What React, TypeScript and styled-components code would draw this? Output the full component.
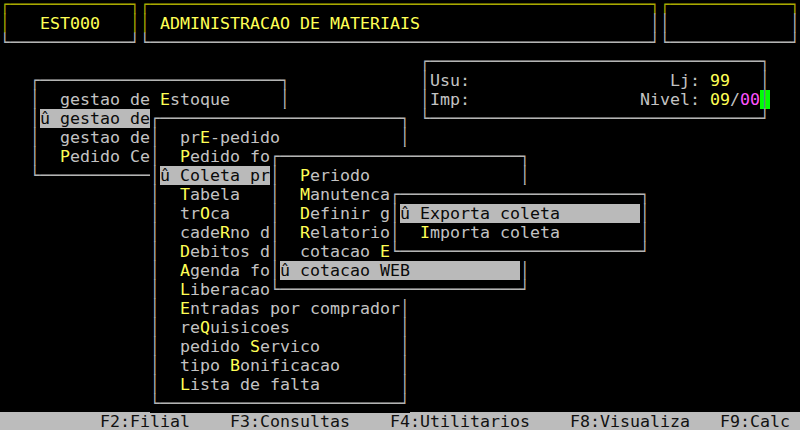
import React from 'react';
import styled, { createGlobalStyle } from 'styled-components';

const c_bg = '#000000';
const c_text = '#c3c3c3';
const c_line = '#b4b4b4';
const c_line_gold = '#a8a800';
const c_hot = '#ffff55';
const c_select = '#bababa';
const c_ink = '#0a0a0a';
const c_magenta = '#ff55ff';
const c_cursor = '#00ff00';

// one terminal cell
const CW = 10;
const CH = 19;

const GlobalStyle = createGlobalStyle`
  html, body {
    margin: 0;
    padding: 0;
    background: ${c_bg};
    overflow: hidden;
  }
`;

const Screen = styled.div`
  width: 800px;
  height: 430px;
  overflow: hidden;
  background: ${c_bg};
  display: flex;
  flex-direction: column;
  font-family: 'DejaVu Sans Mono', 'Liberation Mono', monospace;
  font-size: 16.61px;
  line-height: ${CH}px;
  color: ${c_text};
  white-space: pre;
`;

const Desktop = styled.div`
  position: relative;
  flex: none;
  height: ${22 * CH - 1}px;
  margin-top: -5px;
`;

const Window = styled.div<{ $col: number; $row: number }>`
  position: absolute;
  left: ${(p) => p.$col * CW}px;
  top: ${(p) => p.$row * CH}px;
  background: ${c_bg};
  display: flex;
  flex-direction: column;
`;

const Line = styled.div`
  display: flex;
  height: ${CH}px;
`;

const Edge = styled.span<{ $gold?: boolean }>`
  color: ${(p) => (p.$gold ? c_line_gold : c_line)};
`;

const CursorEdge = styled.span`
  background: ${c_cursor};
  color: #6f7c8c;
`;

const Body = styled.span<{ $w: number; $selected?: boolean }>`
  width: ${(p) => p.$w * CW}px;
  overflow: hidden;
  background: ${(p) => (p.$selected ? c_select : 'transparent')};
  color: ${(p) => (p.$selected ? c_ink : c_text)};
`;

const Hot = styled.span`
  color: ${c_hot};
`;

const Magenta = styled.span`
  color: ${c_magenta};
`;

const StatusBar = styled.div`
  flex: none;
  display: flex;
  height: ${CH}px;
  padding-left: ${10 * CW}px;
  background: #bcbcbc;
  color: #111111;
`;

const FKey = styled.span<{ $gap: number }>`
  margin-left: ${(p) => p.$gap * CW}px;
`;

const hline = (w: number, l: string, r: string) => l + '─'.repeat(w - 2) + r;

type BannerProps = {
  col: number;
  width: number;
  goldLeft?: boolean;
  goldRight?: boolean;
  children?: React.ReactNode;
};

const Banner = ({ col, width, goldLeft, goldRight, children }: BannerProps) => (
  <Window $col={col} $row={0}>
    <Line>
      <Edge $gold>{hline(width, '┌', '┐')}</Edge>
    </Line>
    <Line>
      <Edge $gold={goldLeft}>│</Edge>
      <Body $w={width - 2}>
        <Hot>{children}</Hot>
      </Body>
      <Edge $gold={goldRight}>│</Edge>
    </Line>
    <Line>
      <Edge>{hline(width, '└', '┘')}</Edge>
    </Line>
  </Window>
);

// "~" marks the hotkey letter
type Item = { label: string; selected?: boolean };

const MenuLabel = ({ label, selected }: Item) => {
  const i = label.indexOf('~');
  if (i < 0) return <>{label}</>;
  const before = label.slice(0, i);
  const key = label.charAt(i + 1);
  const after = label.slice(i + 2);
  return (
    <>
      {before}
      {selected ? key : <Hot>{key}</Hot>}
      {after}
    </>
  );
};

const MENU_W = 26;

const Menu = ({ col, row, items }: { col: number; row: number; items: Item[] }) => (
  <Window $col={col} $row={row}>
    <Line>
      <Edge>{hline(MENU_W, '┌', '┐')}</Edge>
    </Line>
    {items.map((it) => (
      <Line key={it.label}>
        <Edge>│</Edge>
        <Body $w={MENU_W - 2} $selected={it.selected}>
          {it.selected ? 'û ' : '  '}
          <MenuLabel {...it} />
        </Body>
        <Edge>│</Edge>
      </Line>
    ))}
    <Line>
      <Edge>{hline(MENU_W, '└', '┘')}</Edge>
    </Line>
  </Window>
);

const INFO_W = 35;

const InfoBox = () => (
  <Window $col={42} $row={3}>
    <Line>
      <Edge>{hline(INFO_W, '┌', '┐')}</Edge>
    </Line>
    <Line>
      <Edge>│</Edge>
      <Body $w={INFO_W - 2}>
        {'Usu:' + ' '.repeat(20) + 'Lj: '}
        <Hot>99</Hot>
      </Body>
      <Edge>│</Edge>
    </Line>
    <Line>
      <Edge>│</Edge>
      <Body $w={INFO_W - 2}>
        {'Imp:' + ' '.repeat(17) + 'Nivel: '}
        <Hot>09</Hot>/<Magenta>00</Magenta>
      </Body>
      <CursorEdge>│</CursorEdge>
    </Line>
    <Line>
      <Edge>{hline(INFO_W, '└', '┘')}</Edge>
    </Line>
  </Window>
);

const mainMenu: Item[] = [
  { label: 'gestao de ~Estoque' },
  { label: 'gestao de ~Compras', selected: true },
  { label: 'gestao de ~Custos' },
  { label: '~Pedido Central' },
];

const comprasMenu: Item[] = [
  { label: 'pr~E-pedido' },
  { label: '~Pedido fornecedor' },
  { label: '~Coleta precos', selected: true },
  { label: '~Tabela' },
  { label: 'tr~Oca' },
  { label: 'cade~Rno de compras' },
  { label: '~Debitos de fornec' },
  { label: '~Agenda fornecedor' },
  { label: '~Liberacao' },
  { label: '~Entradas por comprador' },
  { label: 're~Quisicoes' },
  { label: 'pedido ~Servico' },
  { label: 'tipo ~Bonificacao' },
  { label: '~Lista de falta' },
];

const coletaMenu: Item[] = [
  { label: '~Periodo' },
  { label: '~Manutencao' },
  { label: '~Definir grupos' },
  { label: '~Relatorio' },
  { label: 'cotacao ~Email' },
  { label: 'cotacao WEB', selected: true },
];

const webMenu: Item[] = [
  { label: 'Exporta coleta', selected: true },
  { label: '~Importa coleta' },
];

const fkeys = [
  { label: 'F2:Filial', gap: 0 },
  { label: 'F3:Consultas', gap: 4 },
  { label: 'F4:Utilitarios', gap: 4 },
  { label: 'F8:Visualiza', gap: 4 },
  { label: 'F9:Calc', gap: 3 },
];

export default function App() {
  return (
    <>
      <GlobalStyle />
      <Screen>
        <Desktop>
          <Banner col={0} width={14} goldLeft goldRight>
            {'   EST000'}
          </Banner>
          <Banner col={14} width={52} goldLeft>
            {' ADMINISTRACAO DE MATERIAIS'}
          </Banner>
          <Banner col={66} width={14} />
          <InfoBox />
          <Menu col={3} row={4} items={mainMenu} />
          <Menu col={15} row={6} items={comprasMenu} />
          <Menu col={27} row={8} items={coletaMenu} />
          <Menu col={39} row={10} items={webMenu} />
        </Desktop>
        <StatusBar>
          {fkeys.map((k) => (
            <FKey key={k.label} $gap={k.gap}>
              {k.label}
            </FKey>
          ))}
        </StatusBar>
      </Screen>
    </>
  );
}
